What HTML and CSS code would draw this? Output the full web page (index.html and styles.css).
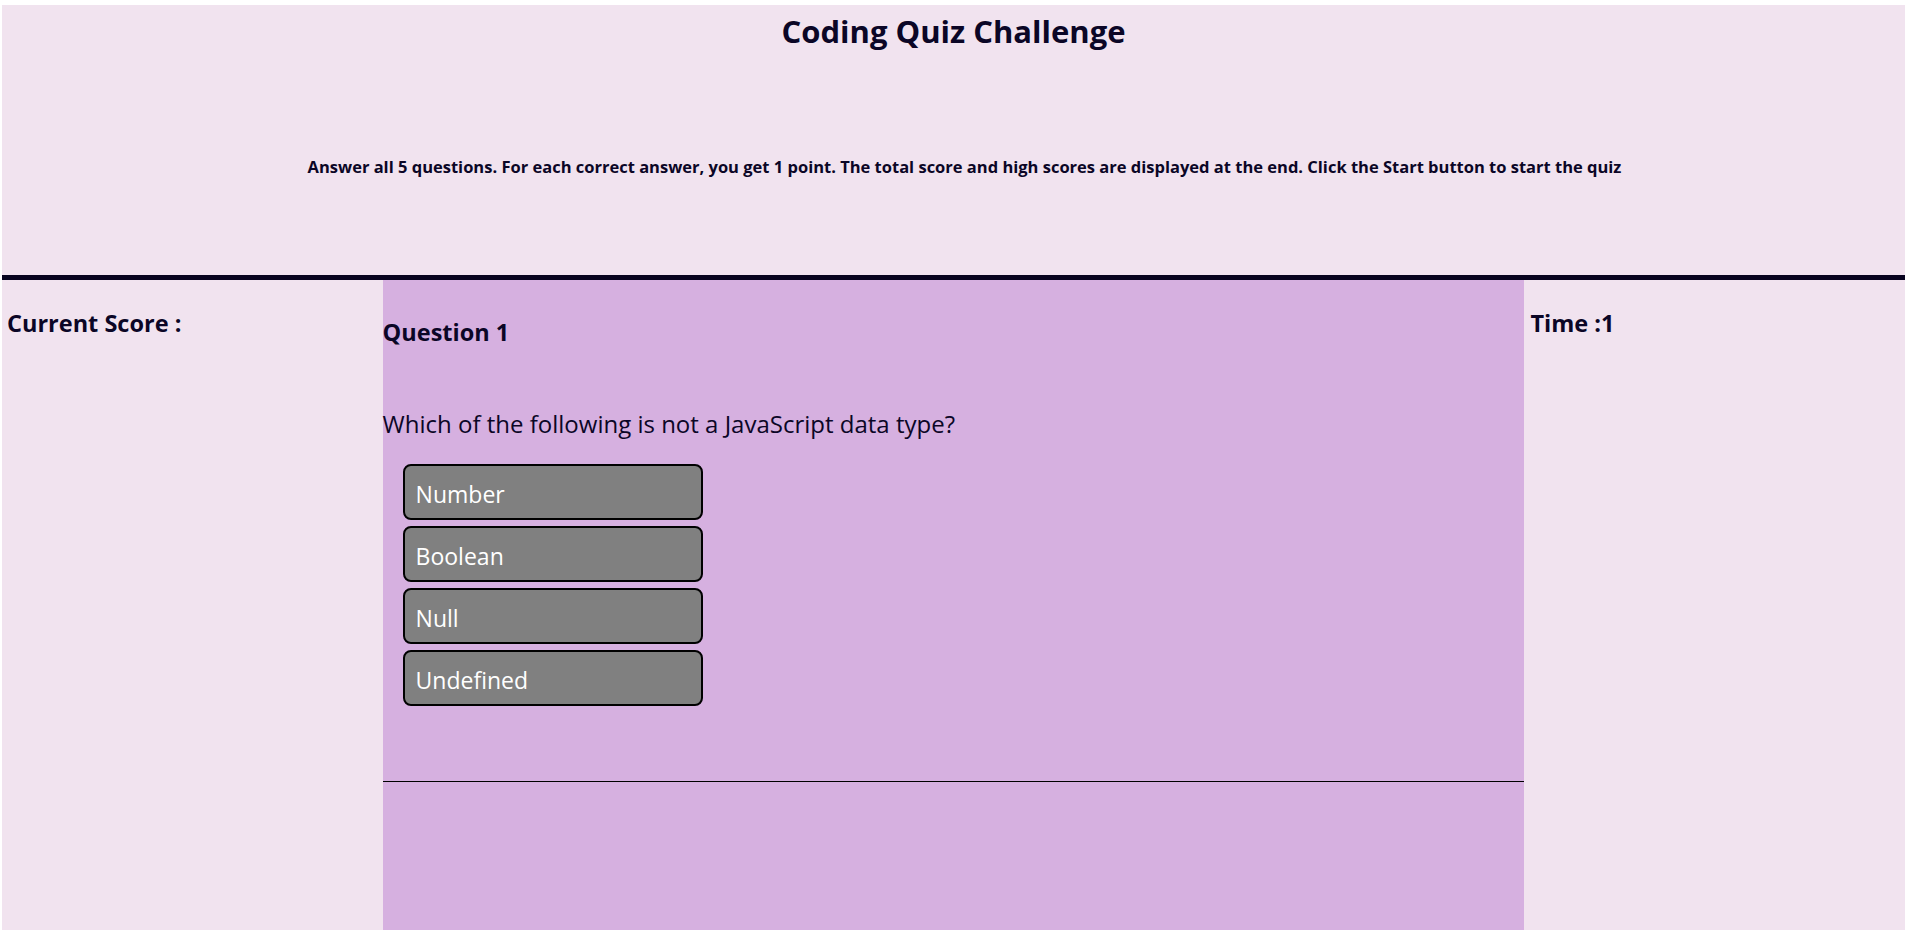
FILE: index.html
```html
<!DOCTYPE html>
<html lang="en">
<head>
<meta charset="utf-8">
<title>Coding Quiz Challenge</title>
<link rel="stylesheet" href="styles.css">
</head>
<body>
<div class="page">
  <header class="header">
    <h1 class="title">Coding Quiz Challenge</h1>
    <p class="intro">Answer all 5 questions. For each correct answer, you get 1 point. The total score and high scores are displayed at the end. Click the Start button to start the quiz</p>
  </header>
  <main class="main">
    <aside class="side side-left">
      <h3 class="side-label">Current Score :</h3>
    </aside>
    <section class="quiz">
      <div class="quiz-body">
        <h3 class="question-title">Question 1</h3>
        <p class="question-text">Which of the following is not a JavaScript data type?</p>
        <div class="choices">
          <button class="choice">Number</button>
          <button class="choice">Boolean</button>
          <button class="choice">Null</button>
          <button class="choice">Undefined</button>
        </div>
      </div>
      <div class="quiz-footer"></div>
    </section>
    <aside class="side side-right">
      <h3 class="side-label">Time :1</h3>
    </aside>
  </main>
</div>
</body>
</html>
```

FILE: styles.css
```css
html, body {
  margin: 0;
  padding: 0;
  background: #ffffff;
}
body {
  font-family: "Open Sans", "Noto Sans", sans-serif;
  color: #0b0626;
}
.page {
  margin: 5px 0 11px 2px;
  display: flex;
  flex-direction: column;
  height: 925px;
}
.header {
  background: #f1e3ef;
  height: 275px;
  flex: 0 0 auto;
  border-bottom: 5px solid #08031f;
  box-sizing: border-box;
  text-align: center;
  padding-top: 8px;
}
.title {
  margin: 0;
  font-size: 31px;
  line-height: 36px;
  font-weight: 700;
}
.intro {
  margin: 107px 0 0;
  padding-left: 22px;
  font-size: 16.5px;
  line-height: 22px;
  font-weight: 700;
}
.main {
  flex: 1;
  display: flex;
}
.side {
  box-sizing: border-box;
  width: 20%;
  flex: 0 0 20%;
  background: #f1e3ef;
  padding: 0 5px;
}
.side-right {
  padding-left: 6px;
}
.side-label {
  margin: 28px 0 0;
  font-size: 23.5px;
  line-height: 30px;
  font-weight: 700;
}
.quiz {
  box-sizing: border-box;
  width: 60%;
  flex: 0 0 60%;
  background: #d6b0e0;
  display: flex;
  flex-direction: column;
}
.quiz-body {
  height: 501px;
  border-bottom: 1px solid #000;
}
.question-title {
  margin: 37px 0 0;
  font-size: 23.5px;
  line-height: 30px;
  font-weight: 700;
}
.question-text {
  margin: 61px 0 0;
  font-size: 24px;
  line-height: 32px;
}
.choices {
  display: flex;
  flex-direction: column;
  gap: 6px;
  margin: 24px 0 0 20px;
}
.choice {
  width: 300px;
  height: 56px;
  box-sizing: border-box;
  background: #808080;
  border: 2px solid #000;
  border-radius: 8px;
  color: #fff;
  font-family: "Open Sans", "Noto Sans", sans-serif;
  font-size: 23px;
  text-align: left;
  padding: 4px 11px 0;
}
.quiz-footer {
  flex: 1;
}
```
